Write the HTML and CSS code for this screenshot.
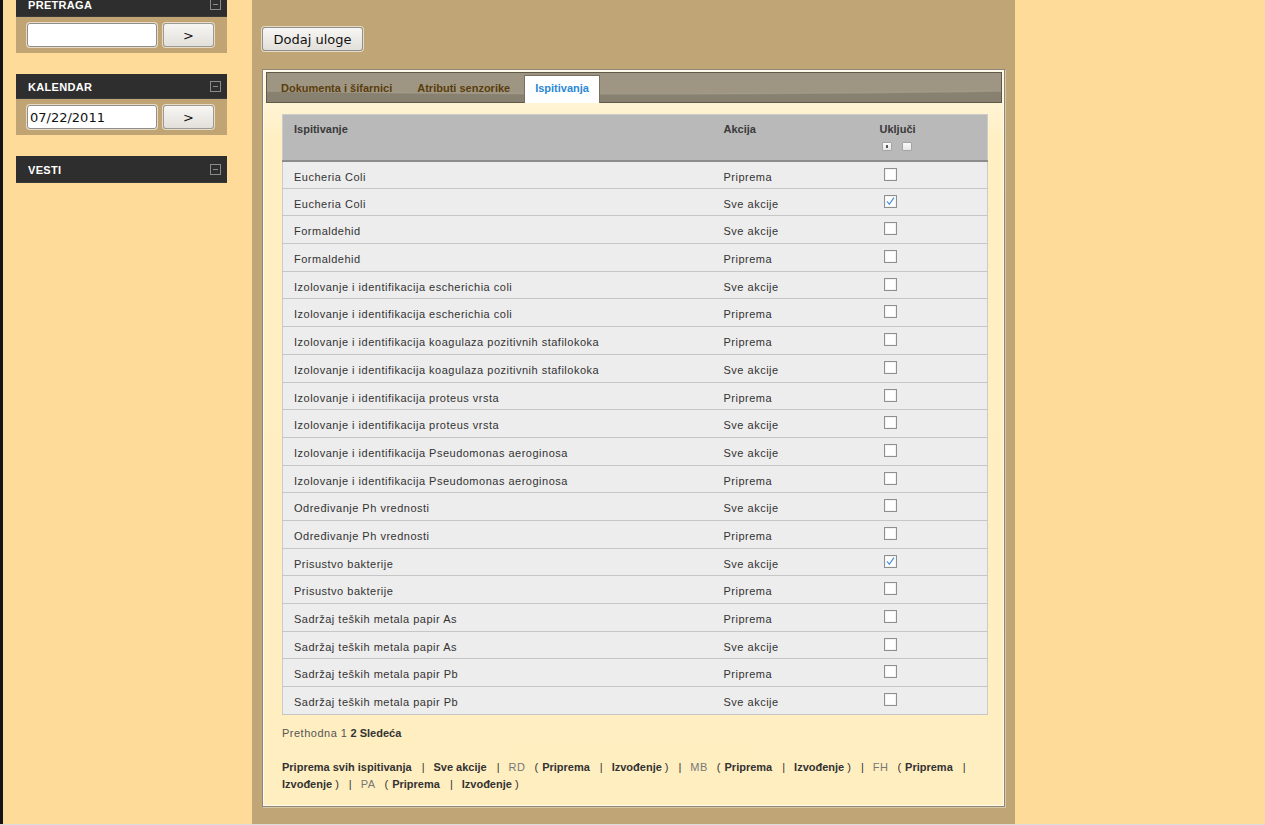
FILE: index.html
```html
<!DOCTYPE html>
<html lang="sr">
<head>
<meta charset="utf-8">
<title>Ispitivanja</title>
<link rel="stylesheet" href="styles.css">
</head>
<body>
<div class="page">
  <aside class="sidebar">
    <div class="box">
      <div class="box-head"><span>PRETRAGA</span><span class="toggle"></span></div>
      <div class="box-body"><input class="field" type="text" value=""><button class="go">&gt;</button></div>
    </div>
    <div class="box">
      <div class="box-head"><span>KALENDAR</span><span class="toggle"></span></div>
      <div class="box-body"><input class="field" type="text" value="07/22/2011"><button class="go">&gt;</button></div>
    </div>
    <div class="box">
      <div class="box-head tall"><span>VESTI</span><span class="toggle"></span></div>
    </div>
  </aside>

  <main class="content">
    <button class="add-btn">Dodaj uloge</button>
    <section class="panel">
      <nav class="tabs">
        <a class="tab">Dokumenta i šifarnici</a>
        <a class="tab">Atributi senzorike</a>
        <a class="tab active">Ispitivanja</a>
      </nav>
      <div class="panel-body">
        <table class="grid">
          <colgroup><col class="c1"><col class="c2"><col class="c3"></colgroup>
          <thead>
            <tr>
              <th>Ispitivanje</th>
              <th>Akcija</th>
              <th>Uključi<div class="mini-row"><span class="mini on"></span><span class="mini"></span></div></th>
            </tr>
          </thead>
          <tbody>
            <tr><td>Eucheria Coli</td><td>Priprema</td><td class="cbc"><span class="cb"></span></td></tr>
            <tr><td>Eucheria Coli</td><td>Sve akcije</td><td class="cbc"><span class="cb checked"><svg viewBox="0 0 13 13"><path d="M2.4 6.4 L5.1 9.8 L10.6 1.8"/></svg></span></td></tr>
            <tr><td>Formaldehid</td><td>Sve akcije</td><td class="cbc"><span class="cb"></span></td></tr>
            <tr><td>Formaldehid</td><td>Priprema</td><td class="cbc"><span class="cb"></span></td></tr>
            <tr><td>Izolovanje i identifikacija escherichia coli</td><td>Sve akcije</td><td class="cbc"><span class="cb"></span></td></tr>
            <tr><td>Izolovanje i identifikacija escherichia coli</td><td>Priprema</td><td class="cbc"><span class="cb"></span></td></tr>
            <tr><td>Izolovanje i identifikacija koagulaza pozitivnih stafilokoka</td><td>Priprema</td><td class="cbc"><span class="cb"></span></td></tr>
            <tr><td>Izolovanje i identifikacija koagulaza pozitivnih stafilokoka</td><td>Sve akcije</td><td class="cbc"><span class="cb"></span></td></tr>
            <tr><td>Izolovanje i identifikacija proteus vrsta</td><td>Priprema</td><td class="cbc"><span class="cb"></span></td></tr>
            <tr><td>Izolovanje i identifikacija proteus vrsta</td><td>Sve akcije</td><td class="cbc"><span class="cb"></span></td></tr>
            <tr><td>Izolovanje i identifikacija Pseudomonas aeroginosa</td><td>Sve akcije</td><td class="cbc"><span class="cb"></span></td></tr>
            <tr><td>Izolovanje i identifikacija Pseudomonas aeroginosa</td><td>Priprema</td><td class="cbc"><span class="cb"></span></td></tr>
            <tr><td>Određivanje Ph vrednosti</td><td>Sve akcije</td><td class="cbc"><span class="cb"></span></td></tr>
            <tr><td>Određivanje Ph vrednosti</td><td>Priprema</td><td class="cbc"><span class="cb"></span></td></tr>
            <tr><td>Prisustvo bakterije</td><td>Sve akcije</td><td class="cbc"><span class="cb checked"><svg viewBox="0 0 13 13"><path d="M2.4 6.4 L5.1 9.8 L10.6 1.8"/></svg></span></td></tr>
            <tr><td>Prisustvo bakterije</td><td>Priprema</td><td class="cbc"><span class="cb"></span></td></tr>
            <tr><td>Sadržaj teških metala papir As</td><td>Priprema</td><td class="cbc"><span class="cb"></span></td></tr>
            <tr><td>Sadržaj teških metala papir As</td><td>Sve akcije</td><td class="cbc"><span class="cb"></span></td></tr>
            <tr><td>Sadržaj teških metala papir Pb</td><td>Priprema</td><td class="cbc"><span class="cb"></span></td></tr>
            <tr><td>Sadržaj teških metala papir Pb</td><td>Sve akcije</td><td class="cbc"><span class="cb"></span></td></tr>
          </tbody>
        </table>

        <div class="pager"><span class="prev">Prethodna 1</span> <b>2 Sledeća</b></div>

        <div class="links">
          <b>Priprema svih ispitivanja</b><span class="sep">|</span><b>Sve akcije</b><span class="sep">|</span><span class="code">RD</span><span class="po">(</span><b>Priprema</b><span class="sep">|</span><b>Izvođenje</b><span class="pc">)</span><span class="sep">|</span><span class="code">MB</span><span class="po">(</span><b>Priprema</b><span class="sep">|</span><b>Izvođenje</b><span class="pc">)</span><span class="sep">|</span><span class="code">FH</span><span class="po">(</span><b>Priprema</b><span class="sep">|</span> <b>Izvođenje</b><span class="pc">)</span><span class="sep">|</span><span class="code">PA</span><span class="po">(</span><b>Priprema</b><span class="sep">|</span><b>Izvođenje</b><span class="pc">)</span>
        </div>
      </div>
    </section>
  </main>
  <div class="rest"></div>
</div>
<div class="footer"></div>
</body>
</html>
```

FILE: styles.css
```css
html, body {
  margin: 0;
  padding: 0;
}
body {
  background: #ffdb9a;
  font-family: "Liberation Sans", Arial, sans-serif;
  font-size: 11px;
  color: #333;
  overflow: hidden;
}
.page {
  display: flex;
  align-items: flex-start;
  border-left: 3px solid #141414;
}

/* ---------- sidebar ---------- */
.sidebar {
  width: 211px;
  padding: 0 25px 0 13px;
  margin-top: -8px;
  display: flex;
  flex-direction: column;
  gap: 21px;
}
.box-head {
  height: 25px;
  background: #2e2e2e;
  color: #fff;
  font-weight: bold;
  letter-spacing: 0.3px;
  display: flex;
  align-items: center;
  justify-content: space-between;
  padding: 0 6px 0 12px;
  border-bottom: 1px solid #3a3a3a;
  box-sizing: border-box;
}
.box-head.tall {
  height: 27px;
}
.box-head span:first-child {
  padding-top: 1px;
}
.toggle {
  width: 11px;
  height: 11px;
  box-sizing: border-box;
  border: 1px solid #8a8a8a;
  position: relative;
}
.toggle::after {
  content: "";
  position: absolute;
  left: 2px;
  right: 2px;
  top: 4px;
  height: 1px;
  background: #8a8a8a;
}
.box-body {
  background: #c1a474;
  padding: 6px 13px 6px 11px;
  display: flex;
  gap: 6px;
}
.field {
  width: 130px;
  height: 24px;
  box-sizing: border-box;
  border: 1px solid #8d8d8d;
  border-radius: 3px;
  background: #fff;
  box-shadow: 0 0 0 1px #e9dcc0;
  padding: 0 2px;
  font-family: "DejaVu Sans", sans-serif;
  font-size: 13px;
  color: #111;
  outline: none;
}
.go {
  width: 51px;
  height: 24px;
  box-sizing: border-box;
  border: 1px solid #9a9a9a;
  border-radius: 3px;
  background: linear-gradient(#f7f6f3, #e3e0db);
  box-shadow: 0 0 0 1px #e9dcc0;
  font-family: "DejaVu Sans", sans-serif;
  font-size: 13px;
  color: #111;
  padding: 0;
}

/* ---------- content ---------- */
.content {
  width: 743px;
  background: #c0a576;
  padding: 27px 10px 17px 10px;
  flex: none;
}
.add-btn {
  display: block;
  width: 101px;
  height: 24px;
  box-sizing: border-box;
  border: 1px solid #8f8f8f;
  border-radius: 3px;
  background: linear-gradient(#f8f7f4, #e2dfda);
  box-shadow: 0 0 0 1px #e7dbc2;
  font-family: "DejaVu Sans", sans-serif;
  font-size: 13px;
  color: #111;
  padding: 0;
  margin: 0 0 18px 0;
}
.panel {
  border: 1px solid #8e8677;
  box-shadow: inset 0 0 0 1px #fffaf0, 1px 1px 0 #d9c8a4;
  background: linear-gradient(#fff8e4 0, #ffefc3 70px, #ffeec0 100%);
  padding: 2px 2px 0 3px;
}
.tabs {
  height: 31px;
  box-sizing: border-box;
  border: 1px solid #5f5949;
  background:
    radial-gradient(ellipse 1250px 62px at 50% -40px, #9d9582 0, #9e9683 96%, #a39b89 98%, rgba(140,131,112,0) 100%),
    linear-gradient(#8d8471, #878070);
  display: flex;
  align-items: flex-end;
  gap: 3px;
  padding-left: 3px;
}
.tab {
  display: block;
  padding: 0 11px;
  height: 26px;
  line-height: 25px;
  font-weight: bold;
  color: #5b3d0c;
}
.tab.active {
  background: #fff;
  color: #2b88d6;
  border: 1px solid #77705f;
  border-bottom: none;
  padding: 0 10px;
  margin-bottom: -1px;
  height: 27px;
  line-height: 25px;
}
.panel-body {
  padding: 11px 15px 13px 16px;
}

/* ---------- grid ---------- */
.grid {
  width: 705px;
  border-collapse: collapse;
  table-layout: fixed;
  background: #ededed;
  border: 1px solid #cbcbcb;
}
.grid col.c1 { width: 430px; }
.grid col.c2 { width: 156px; }
.grid col.c3 { width: 119px; }
.grid th {
  background: #b9b9b9;
  height: 46px;
  box-sizing: border-box;
  text-align: left;
  vertical-align: top;
  font-weight: bold;
  color: #3a3a3a;
  padding: 7px 11px 0 11px;
  line-height: 14px;
  border-bottom: 2px solid #8c8c8c;
}
.mini-row {
  display: flex;
  gap: 10px;
  margin: 6px 0 0 2px;
}
.mini {
  width: 10px;
  height: 9px;
  box-sizing: border-box;
  border: 1px solid #a3a3a3;
  background: linear-gradient(#fafafa, #e6e6e6);
  border-radius: 1px;
  position: relative;
}
.mini.on::after {
  content: "";
  position: absolute;
  left: 3px;
  top: 2px;
  width: 2px;
  height: 3px;
  background: #555;
}
.grid td {
  height: 27.7px;
  box-sizing: border-box;
  padding: 8px 11px 0 11px;
  line-height: 14px;
  vertical-align: top;
  letter-spacing: 0.5px;
  color: #333;
  border-bottom: 1px solid #c6c6c6;
  white-space: nowrap;
}
.grid td.cbc {
  padding: 6px 0 0 15px;
}
.cb {
  display: block;
  width: 13px;
  height: 13px;
  box-sizing: border-box;
  border: 1px solid #8f8f8f;
  background: #fff;
  box-shadow: inset 0 0 0 1px #f2f2f2;
}
.cb svg {
  display: block;
  width: 11px;
  height: 11px;
}
.cb svg path {
  fill: none;
  stroke: #4a92dd;
  stroke-width: 1.5;
}

/* ---------- pager & links ---------- */
.pager {
  margin-top: 11px;
  line-height: 14px;
}
.pager .prev {
  color: #555;
  letter-spacing: 0.5px;
}
.pager b {
  color: #333;
}
.links {
  margin-top: 19px;
  line-height: 17px;
  color: #333;
  width: 700px;
}
.links b {
  font-weight: bold;
  color: #333;
}
.links .sep {
  margin: 0 9px 0 10px;
}
.links .code {
  color: #777;
  letter-spacing: 0.5px;
}
.links .po {
  margin: 0 4px 0 9px;
}
.links .pc {
  margin-left: 3px;
}
.rest {
  flex: 1;
}
.footer {
  height: 2px;
  background: #dcdcdc;
}
```
